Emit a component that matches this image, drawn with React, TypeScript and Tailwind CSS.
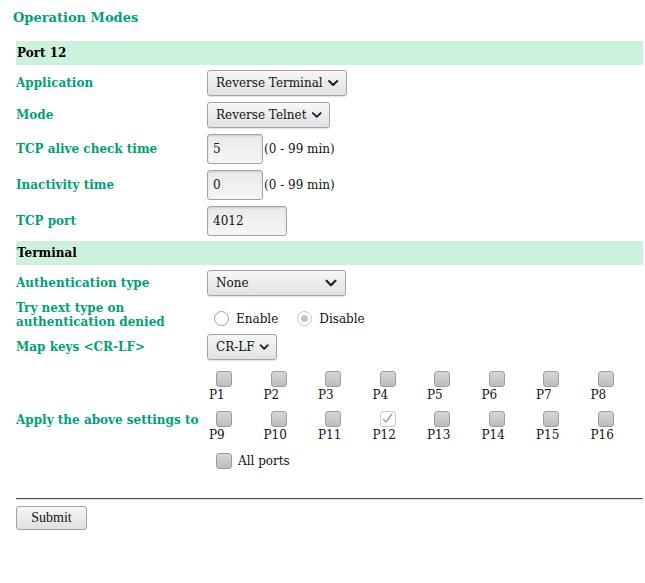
import { ChevronDown } from 'lucide-react';

const green = 'text-[#00a078]';

const Select = ({ value, width }: { value: string; width: string }) => (
  <div
    className={`flex h-[26px] items-center justify-between whitespace-nowrap rounded-[3px] border border-[#a3a3a3] bg-[linear-gradient(#f7f7f7,#e1e1e1)] pl-[8px] pr-[5px] text-[12px] text-[#111] shadow-[0_1px_1px_rgba(0,0,0,0.12)] ${width}`}
  >
    <span>{value}</span>
    <ChevronDown size={18} strokeWidth={3} className="ml-[2px] text-[#222]" />
  </div>
);

const TextBox = ({ value, width }: { value: string; width: string }) => (
  <div
    className={`flex h-[30px] items-center rounded-[3px] border border-[#a3a3a3] bg-[linear-gradient(#e9e9e9,#f6f6f6)] px-[5px] text-[12px] text-[#111] shadow-[inset_0_1px_2px_rgba(0,0,0,0.12)] ${width}`}
  >
    {value}
  </div>
);

const Box = ({ checked = false }: { checked?: boolean }) =>
  checked ? (
    <span className="flex h-[16px] w-[16px] items-center justify-center rounded-[3px] border border-[#c9c9c9] bg-white">
      <svg width="13" height="13" viewBox="0 0 13 13">
        <path d="M2 7 L5 10 L11 2" fill="none" stroke="#a9a9a9" strokeWidth="1.6" />
      </svg>
    </span>
  ) : (
    <span className="block h-[16px] w-[16px] rounded-[3px] border border-[#9d9d9d] bg-[linear-gradient(#d6d6d6,#bcbcbc)]" />
  );

const Band = ({ title }: { title: string }) => (
  <div className="flex h-[24px] items-center bg-[#ccf2dd] pl-[1px] text-[12px] font-bold text-black">
    {title}
  </div>
);

const Row = ({ label, children }: { label: string; children: React.ReactNode }) => (
  <div className="flex items-center">
    <div className={`w-[191px] text-[12px] font-bold ${green}`}>{label}</div>
    {children}
  </div>
);

export default function App() {
  const ports = Array.from({ length: 16 }, (_, i) => i + 1);

  return (
    <div className="min-h-[583px] bg-white pl-[16px] pr-[2px] pt-[8px] font-['DejaVu_Serif',serif] text-[12px] text-[#111]">
      <h1 className={`ml-[-3px] text-[13px] font-bold ${green}`}>Operation Modes</h1>

      <div className="mt-[13px]">
        <Band title="Port 12" />
      </div>

      <div className="mt-[5px] flex flex-col gap-[6px]">
        <Row label="Application">
          <Select value="Reverse Terminal" width="w-[140px]" />
        </Row>
        <Row label="Mode">
          <Select value="Reverse Telnet" width="w-[123px]" />
        </Row>
        <Row label="TCP alive check time">
          <TextBox value="5" width="w-[56px]" />
          <span className="ml-[1px]">(0 - 99 min)</span>
        </Row>
        <Row label="Inactivity time">
          <TextBox value="0" width="w-[56px]" />
          <span className="ml-[1px]">(0 - 99 min)</span>
        </Row>
        <Row label="TCP port">
          <TextBox value="4012" width="w-[80px]" />
        </Row>
      </div>

      <div className="mt-[5px]">
        <Band title="Terminal" />
      </div>

      <div className="mt-[5px] flex flex-col gap-[4px]">
        <Row label="Authentication type">
          <Select value="None" width="w-[139px]" />
        </Row>
        <div className="mt-[1px] flex items-center">
          <div className={`w-[191px] text-[12px] leading-[14px] font-bold ${green}`}>
            Try next type on
            <br />
            authentication denied
          </div>
          <div className="mt-[8px] flex items-center">
            <span className="ml-[7px] block h-[15px] w-[15px] rounded-full border border-[#9d9d9d] bg-white" />
            <span className="ml-[7px]">Enable</span>
            <span className="ml-[19px] flex h-[15px] w-[15px] items-center justify-center rounded-full border border-[#c4c4c4] bg-white">
              <span className="block h-[7px] w-[7px] rounded-full bg-[#c4c4c4]" />
            </span>
            <span className="ml-[7px]">Disable</span>
          </div>
        </div>
        <div className="mt-[1px]">
          <Row label="Map keys <CR-LF>">
            <Select value="CR-LF" width="w-[70px]" />
          </Row>
        </div>
      </div>

      <div className="mt-[11px] flex items-center">
        <div className={`w-[191px] whitespace-nowrap text-[12px] font-bold ${green}`}>Apply the above settings to</div>
        <div className="flex-1">
          <div className="grid grid-cols-8 gap-y-[8px]">
            {ports.map((p) => (
              <div key={p} className="flex flex-col">
                <span className="ml-[9px]">
                  <Box checked={p === 12} />
                </span>
                <span className="ml-[2px] leading-[16px]">P{p}</span>
              </div>
            ))}
          </div>
          <div className="mt-[9px] ml-[9px] flex items-center">
            <Box />
            <span className="ml-[6px]">All ports</span>
          </div>
        </div>
      </div>

      <div className="mt-[28px] border-t border-b border-t-[#505050] border-b-[#dcdcdc]" />

      <button
        type="button"
        className="mt-[6px] h-[24px] w-[71px] rounded-[3px] border border-[#a0a0a0] bg-[linear-gradient(#f6f6f6,#e0e0e0)] font-['Liberation_Serif',serif] text-[14px] text-[#111]"
      >
        Submit
      </button>
    </div>
  );
}
